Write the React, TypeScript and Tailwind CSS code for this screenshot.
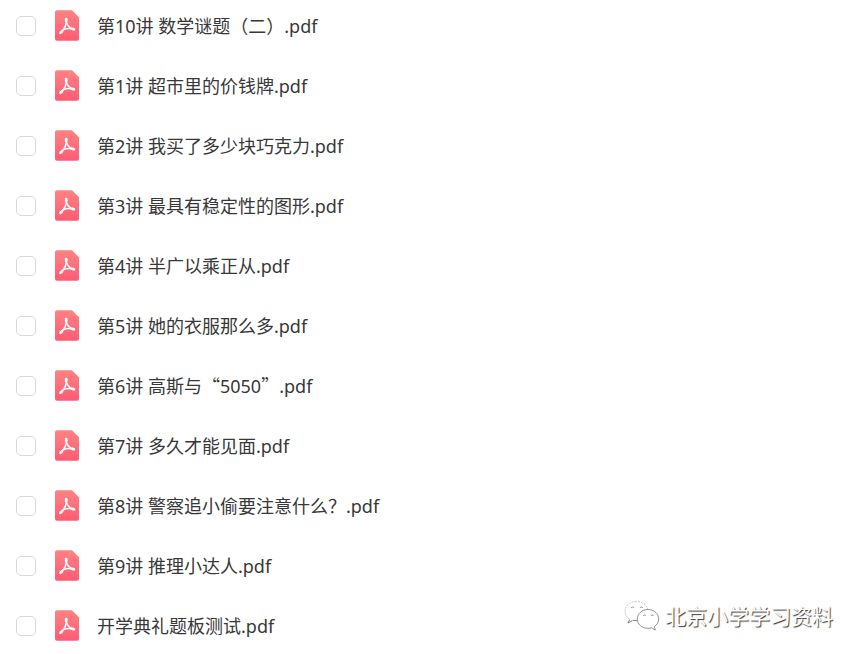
import React from "react";

const files = [
  "第10讲 数学谜题（二）.pdf",
  "第1讲 超市里的价钱牌.pdf",
  "第2讲 我买了多少块巧克力.pdf",
  "第3讲 最具有稳定性的图形.pdf",
  "第4讲 半广以乘正从.pdf",
  "第5讲 她的衣服那么多.pdf",
  "第6讲 高斯与“5050”.pdf",
  "第7讲 多久才能见面.pdf",
  "第8讲 警察追小偷要注意什么？.pdf",
  "第9讲 推理小达人.pdf",
  "开学典礼题板测试.pdf",
];

function PdfIcon() {
  return (
    <svg width="24" height="32" viewBox="0 0 24 32" className="shrink-0" aria-hidden="true">
      <defs>
        <linearGradient id="pdf-bg" x1="0" y1="0" x2="0" y2="1">
          <stop offset="0" stopColor="#ff8383" />
          <stop offset="1" stopColor="#ff5b73" />
        </linearGradient>
      </defs>
      <path
        d="M2 0.3H17L24 7.3V28.7a2 2 0 0 1-2 2H2a2 2 0 0 1-2-2V2.3a2 2 0 0 1 2-2Z"
        fill="url(#pdf-bg)"
      />
      <g fill="none" stroke="#fff" strokeLinecap="round" strokeLinejoin="round">
        <path
          d="M11.3 9.3C11.6 12.1 11.5 14 10.2 16.7C9 19.3 7.2 21.3 5.5 22.8"
          strokeWidth="1.6"
        />
        <path d="M11.5 12.5C12.2 15.2 14.5 17.9 18.7 19.2" strokeWidth="1.5" />
        <path d="M7.8 20C10.8 18.4 14.5 18 18.5 19.2" strokeWidth="1.5" />
        <path d="M11.2 9.1V10.9M5.4 22.7L6.9 21.5M17.3 18.9L18.9 19.3" strokeWidth="2.7" />
      </g>
    </svg>
  );
}

function WechatIcon() {
  return (
    <svg
      width="36"
      height="32"
      viewBox="0 0 36 32"
      className="shrink-0"
      fill="#fff"
      stroke="#777"
      strokeWidth="0.8"
      aria-hidden="true"
    >
      <path
        d="M12.5 2.5C6 2.500 1 6.700 1 12.200c0 3.100 1.600 5.800 4.200 7.600L4 24l4.600-2.700c1.300.4 2.600.6 3.900.6C19 21.900 24 17.700 24 12.200S19 2.500 12.500 2.500Z"
        strokeDasharray="2 1"
        stroke="#bbb"
      />
      <path d="M6 20.500L4 24l4.600-2.400M9 21.500h4" fill="none" />
      <path d="M24 10.500C18.100 10.500 13.300 14.700 13.300 20s4.800 9.300 10.700 9.300c1.300 0 2.500-.2 3.600-.5L31.300 31l-.9-3.500c2.600-1.700 4.300-4.400 4.300-7.500C34.700 14.700 29.900 10.500 24 10.500Z" />
      <g fill="none">
        <path d="M7 9a1.500 1.500 0 0 1 2.800 0M16 9a1.500 1.500 0 0 1 2.800 0" />
        <path d="M19.200 17a1.300 1.300 0 0 1 2.500 0M27 17a1.300 1.300 0 0 1 2.500 0" />
      </g>
    </svg>
  );
}

function FileName({ name }: { name: string }) {
  // curly quotes take a full-width cell, as the chinese glyphs do
  return (
    <span>
      {name.split(/([“”])/).map((part, i) =>
        part === "“" || part === "”" ? (
          <span key={i} className="font-['Noto_Sans_CJK_SC',sans-serif] leading-none">
            {part}
          </span>
        ) : (
          part
        )
      )}
    </span>
  );
}

export default function App() {
  return (
    <main
      lang="zh-CN"
      className="relative bg-white text-[#383838] font-['Noto_Sans','Noto_Sans_CJK_SC',sans-serif]"
    >
      {/* File list */}
      <ul className="flex flex-col gap-2">
        {files.map((name) => (
          <li key={name}>
            <label className="flex h-[52px] items-center pl-4 text-lg leading-6 whitespace-nowrap">
              <input
                type="checkbox"
                className="mr-[19px] size-5 shrink-0 appearance-none rounded-[5px] border border-[#d8d8d8] bg-white checked:bg-[#ff5b73]"
              />
              <PdfIcon />
              <span className="ml-[18px]">
                <FileName name={name} />
              </span>
            </label>
          </li>
        ))}
      </ul>

      {/* Watermark */}
      <div className="absolute right-7 bottom-[21px] flex items-center gap-[5px]">
        <WechatIcon />
        <span className="font-['Noto_Sans_CJK_SC',sans-serif] text-[21px] leading-8 text-white [text-shadow:1px_1px_1px_#333]">
          北京小学学习资料
        </span>
      </div>
    </main>
  );
}
